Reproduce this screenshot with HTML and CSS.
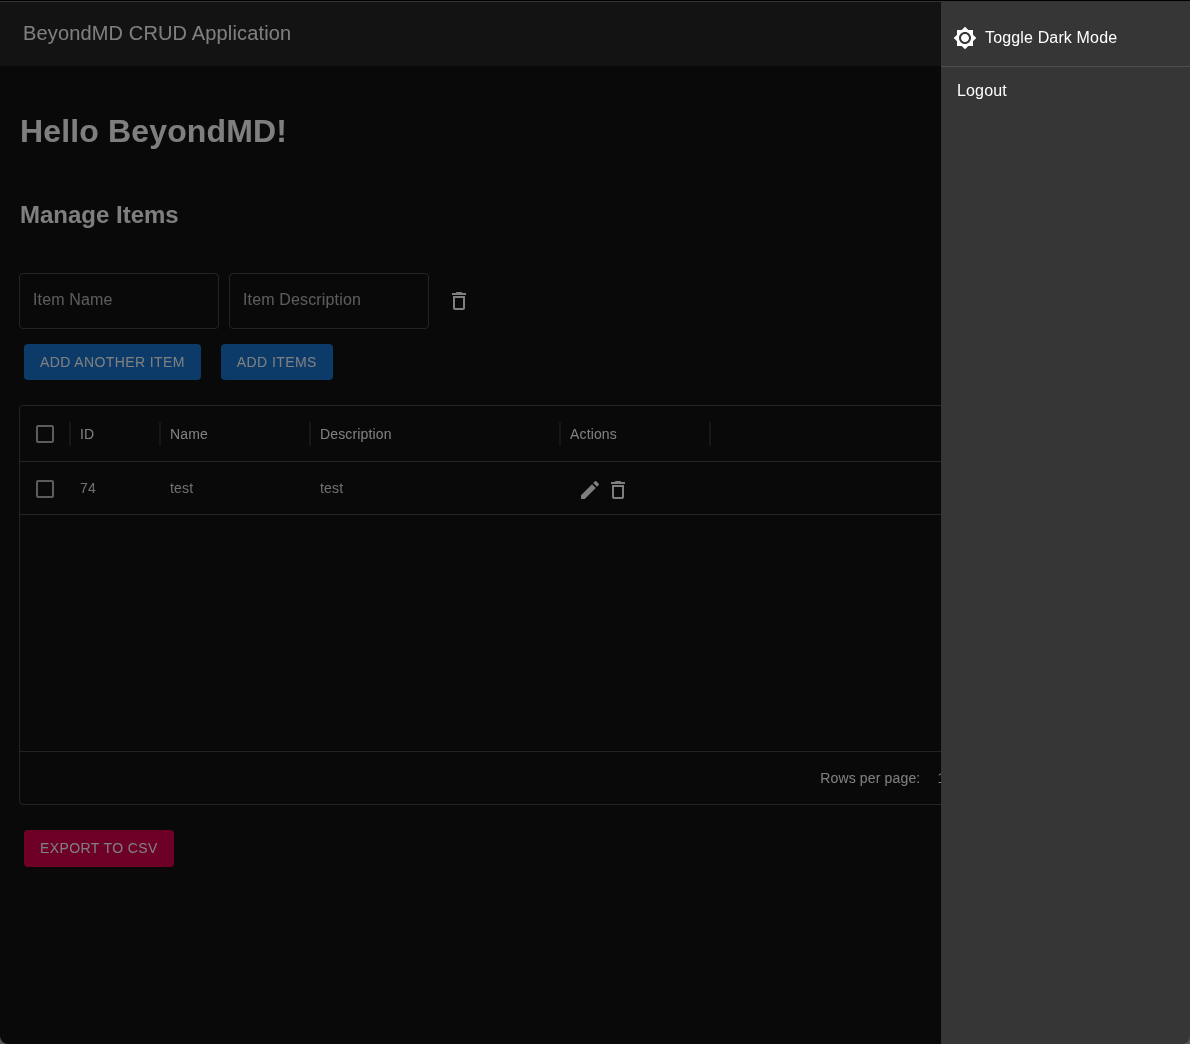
FILE: index.html
```html
<!DOCTYPE html>
<html lang="en">
<head>
<meta charset="utf-8">
<title>BeyondMD CRUD Application</title>
<link rel="stylesheet" href="styles.css">
</head>
<body>
<header class="appbar"><span class="layer">BeyondMD CRUD Application</span></header>
<main class="content layer">
  <h1 class="hello">Hello BeyondMD!</h1>
  <h2 class="manage">Manage Items</h2>
  <div class="form-row">
    <div class="field">Item Name</div>
    <div class="field">Item Description</div>
    <svg class="icon form-trash" viewBox="0 0 24 24"><path d="M6 19c0 1.1.9 2 2 2h8c1.1 0 2-.9 2-2V7H6v12zM8 9h8v10H8V9zm7.5-5-1-1h-5l-1 1H5v2h14V4h-3.5z"/></svg>
  </div>
  <div class="btn-row">
    <button class="btn btn-blue">Add Another Item</button>
    <button class="btn btn-blue">Add Items</button>
  </div>
  <section class="table">
    <div class="row head">
      <div class="cell check"><span class="box"></span></div>
      <div class="cell">ID</div>
      <div class="cell">Name</div>
      <div class="cell">Description</div>
      <div class="cell">Actions</div>
    </div>
    <div class="row body-row">
      <div class="cell check"><span class="box"></span></div>
      <div class="cell">74</div>
      <div class="cell">test</div>
      <div class="cell">test</div>
      <div class="cell actions">
        <svg class="icon" viewBox="0 0 24 24"><path d="M3 17.25V21h3.75L17.81 9.94l-3.75-3.75L3 17.25zM20.71 7.04a1 1 0 0 0 0-1.41l-2.34-2.34a1 1 0 0 0-1.41 0l-1.83 1.83 3.75 3.75 1.83-1.83z"/></svg>
        <svg class="icon" viewBox="0 0 24 24"><path d="M6 19c0 1.1.9 2 2 2h8c1.1 0 2-.9 2-2V7H6v12zM8 9h8v10H8V9zm7.5-5-1-1h-5l-1 1H5v2h14V4h-3.5z"/></svg>
      </div>
    </div>
    <div class="table-space"></div>
    <div class="pager"><span>Rows per page:</span><span class="pager-size">100</span><span class="pager-range">1–1 of 1</span></div>
  </section>
  <button class="btn btn-red">Export to CSV</button>
</main>
<div class="backdrop"></div>
<aside class="drawer">
  <div class="drawer-top">
    <svg class="sun" viewBox="0 0 24 24"><path d="M20 8.69V4h-4.69L12 .69 8.69 4H4v4.69L.69 12 4 15.31V20h4.69L12 23.31 15.31 20H20v-4.69L23.31 12 20 8.69zM12 18c-3.31 0-6-2.69-6-6s2.69-6 6-6 6 2.69 6 6-2.69 6-6 6zm0-10c-2.21 0-4 1.79-4 4s1.79 4 4 4 4-1.79 4-4-1.79-4-4-4z"/></svg>
    <span class="layer">Toggle Dark Mode</span>
  </div>
  <div class="drawer-item"><span class="layer">Logout</span></div>
</aside>
<div class="window-frame"></div>
</body>
</html>
```
FILE: styles.css
```css
* { box-sizing: border-box; }
html, body { height: 100%; }
body {
  margin: 0;
  background: #121212;
  color: #fff;
  font-family: "Liberation Sans", Arial, sans-serif;
  overflow: hidden;
}
.layer { will-change: transform; display: block; }
.appbar {
  height: 66px;
  padding: 1px 23px 0;
  display: flex;
  align-items: center;
  background: #272727;
  font-size: 20px;
  letter-spacing: 0.15px;
}
.content { padding: 0 19px; }
.hello { margin: 44px 0 0 1px; font-size: 32px; line-height: 42px; font-weight: 700; letter-spacing: 0.15px; }
.manage { margin: 47px 0 0 1px; font-size: 24px; line-height: 32px; font-weight: 700; }
.form-row { display: flex; align-items: center; gap: 10px; margin-top: 42px; }
.field {
  width: 200px;
  height: 56px;
  padding: 0 13px 3px;
  display: flex;
  align-items: center;
  border: 1px solid rgba(255,255,255,.23);
  border-radius: 4px;
  font-size: 16px;
  letter-spacing: 0.15px;
  color: rgba(255,255,255,.7);
}
.icon { width: 24px; height: 24px; fill: #fff; display: block; flex: none; }
.form-trash { margin: 0 0 0 8px; }
.btn-row { display: flex; gap: 20px; margin: 15px 0 0 5px; }
.btn {
  height: 36px;
  padding: 0 16px;
  border: 0;
  border-radius: 4px;
  color: #fff;
  font: 14px "Liberation Sans", Arial, sans-serif;
  letter-spacing: 0.4px;
  text-transform: uppercase;
}
.btn-blue { background: #1976d2; }
.btn-red { background: #dc004e; height: 37px; padding-bottom: 2px; margin: 25px 0 0 5px; display: block; }
.table {
  width: 1152px;
  height: 400px;
  margin-top: 25px;
  display: flex;
  flex-direction: column;
  border: 1px solid rgba(255,255,255,.23);
  border-radius: 4px;
  font-size: 14px;
}
.row {
  display: grid;
  grid-template-columns: 51px 90px 150px 250px 150px;
  align-items: center;
  border-bottom: 1px solid rgba(255,255,255,.23);
  letter-spacing: 0.15px;
}
.head { height: 56px; }
.body-row { height: 53px; color: rgba(255,255,255,.87); }
.cell { padding: 0 10px 0 9px; }
.head .cell { height: 24px; display: flex; align-items: center; border-right: 2px solid rgba(255,255,255,.12); }
.check { padding: 0 0 0 16px; }
.box { display: block; width: 18px; height: 18px; border: 2px solid rgba(255,255,255,.7); border-radius: 2px; }
.body-row .box { margin-top: 2px; }
.actions { display: flex; gap: 4px; padding: 3px 0 0 17px; }
.table-space { height: 236px; }
.pager {
  flex: 1;
  display: flex;
  align-items: center;
  justify-content: flex-end;
  border-top: 1px solid rgba(255,255,255,.23);
  padding-right: 116px;
  gap: 17px;
  letter-spacing: 0.15px;
}
.pager-range { margin-left: 24px; }
.backdrop { position: fixed; inset: 0; background: rgba(0,0,0,.5); }
.drawer {
  position: fixed;
  top: 0;
  right: 0;
  bottom: 0;
  width: 249px;
  background: #363636;
  font-size: 16px;
  letter-spacing: 0.15px;
}
.drawer-top {
  height: 67px;
  padding: 9px 14px 0 12px;
  display: flex;
  align-items: center;
  gap: 8px;
  border-bottom: 1px solid rgba(255,255,255,.12);
}
.sun { width: 24px; height: 24px; fill: #fff; flex: none; }
.drawer-item { padding: 14px 16px; line-height: 20px; }
.window-frame {
  position: fixed;
  inset: 0;
  border-top: 1px solid #000;
  border-radius: 0 0 8px 8px;
  box-shadow: 0 0 0 20px #555;
  pointer-events: none;
}
.window-frame::before {
  content: "";
  display: block;
  height: 1px;
  background: #333;
}
```
